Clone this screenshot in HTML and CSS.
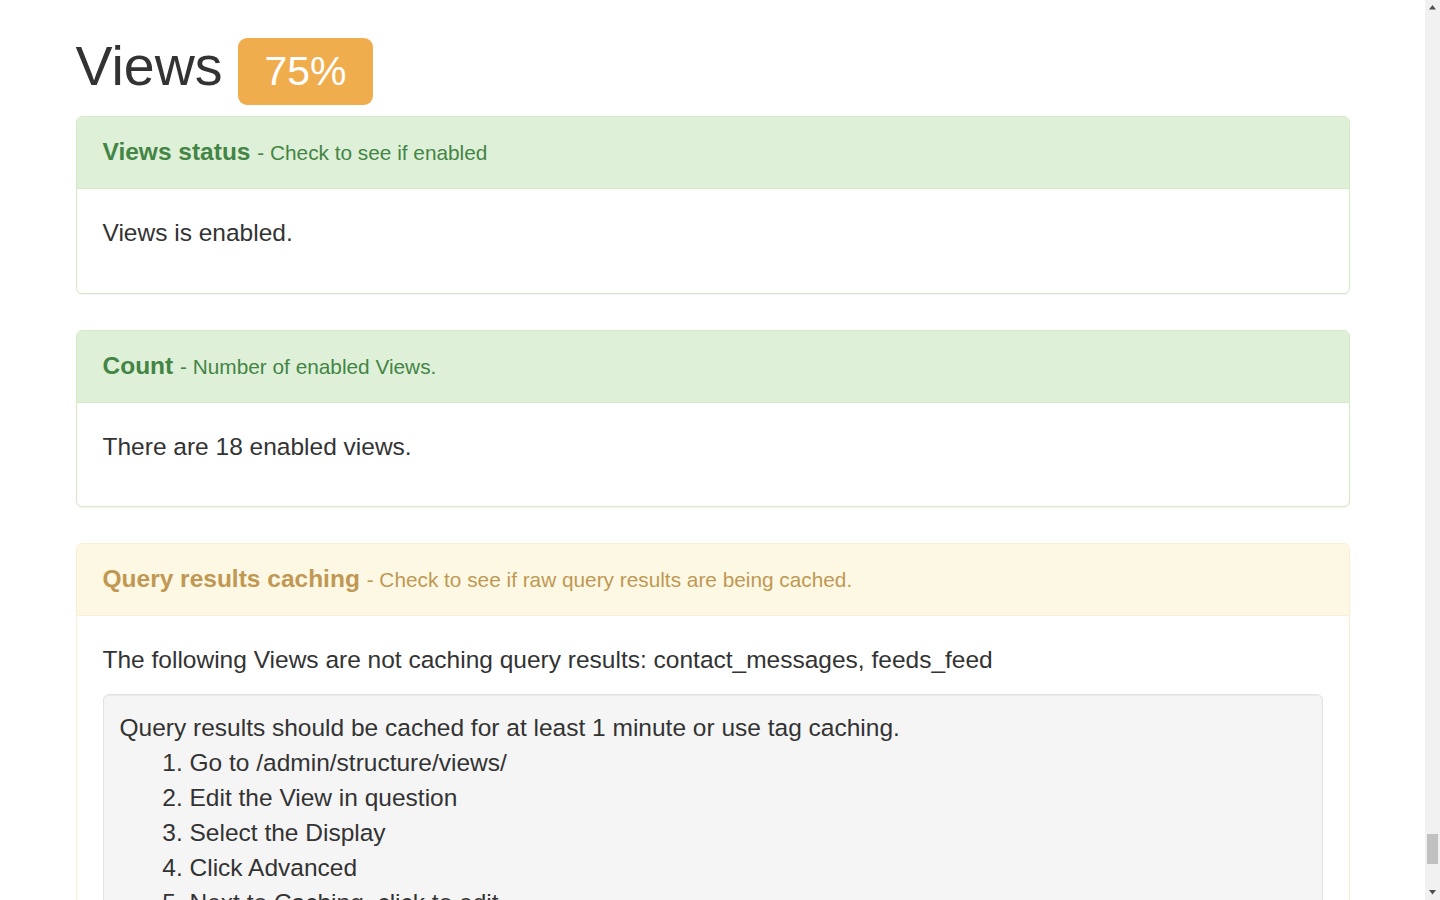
FILE: index.html
```html
<!DOCTYPE html>
<html>

<head>
  <meta charset="utf-8" />
  <title>Views report</title>
  <link rel="stylesheet" href="styles.css">
</head>

<body>
  <div class="container">
    <h1 class="section-title">Views <span class="label label-warning">75%</span></h1>

    <div class="panel panel-success">
      <div class="panel-heading">
        <h3 class="panel-title">Views status <small>- Check to see if enabled</small></h3>
      </div>
      <div class="panel-body">
        <p>Views is enabled.</p>
      </div>
    </div>

    <div class="panel panel-success">
      <div class="panel-heading">
        <h3 class="panel-title">Count <small>- Number of enabled Views.</small></h3>
      </div>
      <div class="panel-body">
        <p>There are 18 enabled views.</p>
      </div>
    </div>

    <div class="panel panel-warning">
      <div class="panel-heading">
        <h3 class="panel-title">Query results caching <small>- Check to see if raw query results are being cached.</small></h3>
      </div>
      <div class="panel-body">
        <p>The following Views are not caching query results: contact_messages, feeds_feed</p>
        <div class="well">
          Query results should be cached for at least 1 minute or use tag caching.
          <ol>
            <li>Go to /admin/structure/views/</li>
            <li>Edit the View in question</li>
            <li>Select the Display</li>
            <li>Click Advanced</li>
            <li>Next to Caching, click to edit</li>
            <li>Caching: (something other than None)</li>
          </ol>
        </div>
      </div>
    </div>
  </div>

  <!-- window scrollbar, page is scrolled near the end -->
  <div class="scrollbar">
    <svg class="scroll-arrow scroll-up" width="15" height="15" viewBox="0 0 15 15"><path d="M4 9.5 L7.5 5 L11 9.5 Z" fill="#505050" /></svg>
    <div class="scroll-thumb"></div>
    <svg class="scroll-arrow scroll-down" width="15" height="15" viewBox="0 0 15 15"><path d="M4 5 L7.5 9.5 L11 5 Z" fill="#505050" /></svg>
  </div>
</body>

</html>
```

FILE: styles.css
```css
html {
  background: #fff;
}

body {
  margin: 0;
  padding-right: 15px;
  font-family: "Liberation Sans", Helvetica, Arial, sans-serif;
  font-size: 24.5px;
  line-height: 35px;
  color: #333;
}

.container {
  max-width: 1274px;
  margin: 0 auto;
}

.section-title {
  margin: 37.4px 0 11px;
  font-size: 55.5px;
  font-weight: 500;
  line-height: 59px;
}

.label {
  display: inline-block;
  padding: 13px 26.5px;
  font-size: 41px;
  font-weight: 400;
  line-height: 1;
  color: #fff;
  border-radius: 9px;
}

.label-warning {
  background-color: #f0ad4e;
}

.panel {
  margin-bottom: 36px;
  background: #fff;
  border: 1px solid transparent;
  border-radius: 6px;
  box-shadow: 0 1px 1px rgba(0, 0, 0, 0.05);
}

.panel-heading {
  padding: 22px 26px;
  border-bottom: 1px solid transparent;
  border-radius: 5px 5px 0 0;
}

.panel-title {
  margin: 0;
  font-size: 24.5px;
  font-weight: 700;
  line-height: 26px;
}

.panel-title small {
  font-size: 20.8px;
  font-weight: 400;
}

.panel-body {
  padding: 26px;
}

.panel-body p {
  margin: 0 0 16.5px;
}

.panel-success {
  border-color: #d6e9c6;
}

.panel-success .panel-heading {
  background: #dff0d8;
  border-color: #d6e9c6;
  color: #438545;
}

.panel-warning {
  border-color: #fbeed5;
}

.panel-warning .panel-heading {
  background: #fcf8e3;
  border-color: #fbeed5;
  color: #c09853;
}

.well {
  padding: 15px 16px;
  background: #f5f5f5;
  border: 1px solid #e3e3e3;
  border-radius: 6px;
  box-shadow: inset 0 1px 1px rgba(0, 0, 0, 0.05);
}

.well ol {
  margin: 0;
  padding-left: 70px;
}

.scrollbar {
  position: fixed;
  top: 0;
  right: 0;
  width: 15px;
  height: 100vh;
  background: #f1f1f1;
}

.scroll-arrow {
  position: absolute;
  left: 0;
  display: block;
}

.scroll-up {
  top: 0;
}

.scroll-down {
  bottom: 0;
}

.scroll-thumb {
  position: absolute;
  top: 834px;
  left: 2px;
  width: 11px;
  height: 30px;
  background: #c1c1c1;
}
```
